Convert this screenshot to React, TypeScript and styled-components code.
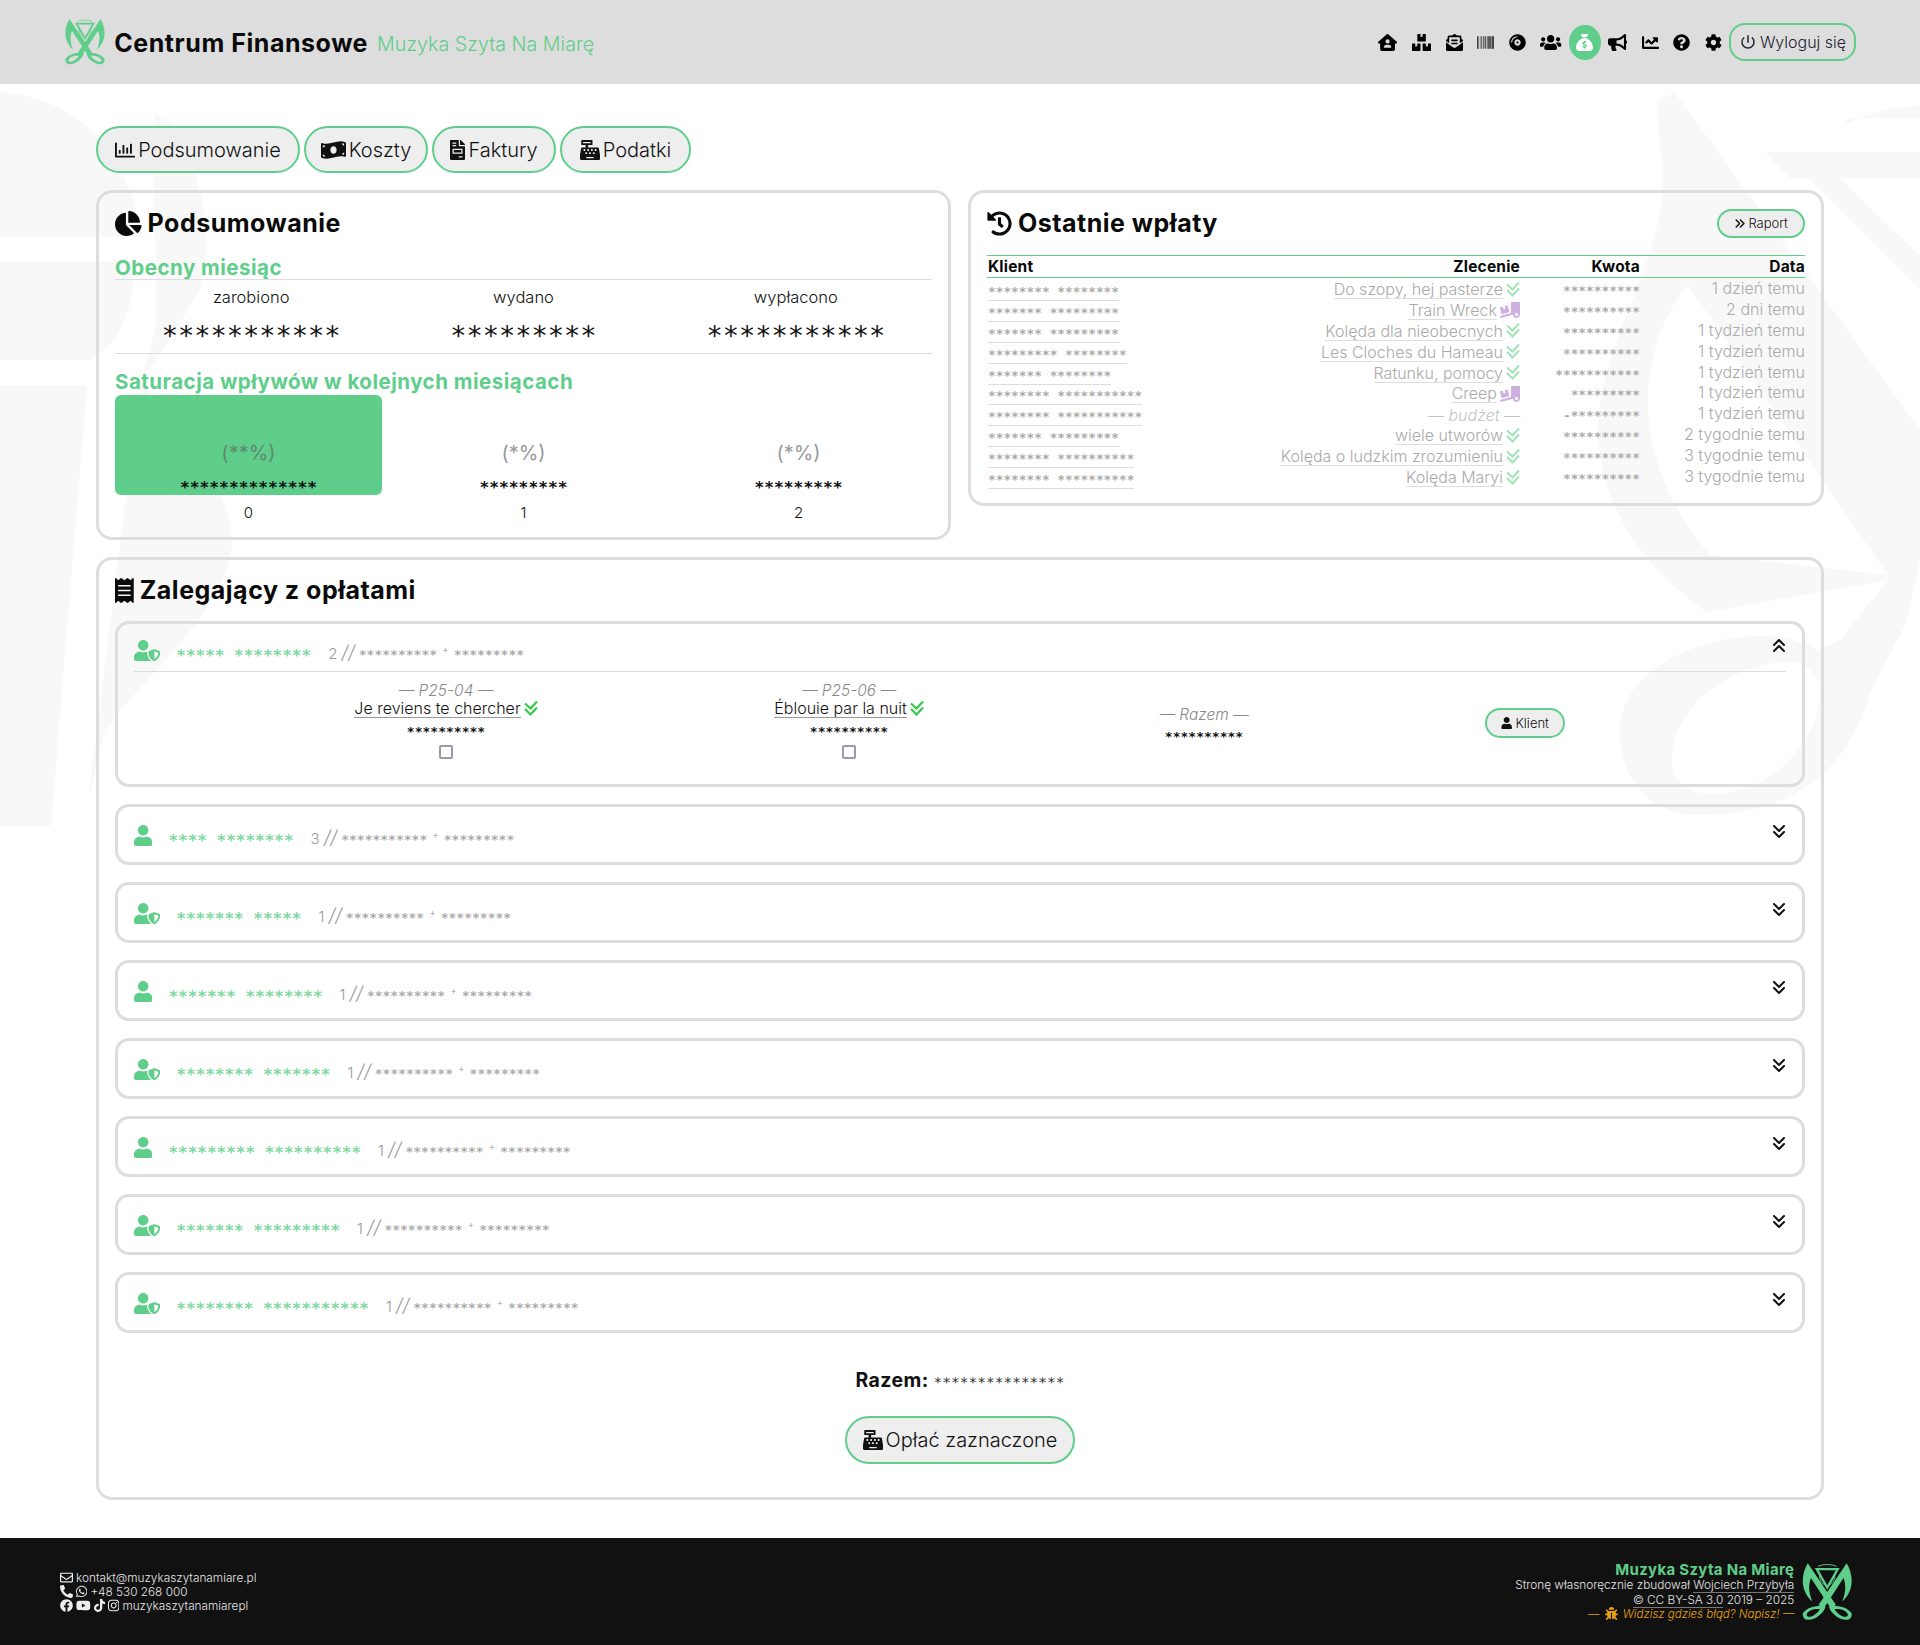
import React from 'react'
import styled, { createGlobalStyle } from 'styled-components'
import type { IconType } from 'react-icons'
import {
  FaBarcode, FaBug, FaBullhorn, FaCashRegister, FaChartLine,
  FaChartPie, FaCog, FaCompactDisc, FaEnvelopeOpenText, FaFacebook, FaFileInvoice, FaHistory,
  FaInstagram, FaMoneyBillWave, FaPhoneAlt, FaQuestionCircle, FaReceipt, FaTiktok, FaTruckLoading, FaUser, FaUserShield, FaUsers,
  FaWhatsapp, FaYoutube, FaBoxes, FaRegEnvelope, FaRegChartBar,
} from 'react-icons/fa'
import { FaAnglesDown, FaAnglesRight, FaAnglesUp, FaHouseUser, FaSackDollar } from 'react-icons/fa6'
import { MdPowerSettingsNew } from 'react-icons/md'

const GREEN = '#5fce8b'
const LIGHT = '"Inter", "Lato", sans-serif'
const HEAVY = '"Inter", "Noto Sans", sans-serif'
const MONO = '"DejaVu Sans Mono", monospace'

// react-icons draws every glyph in a 1em square, wide ones need their real ratio back
const sized = (Icon: IconType, ratio: number) => styled(Icon)`
  width: ${ratio}em;
  flex: none;
`

const HouseIcon = sized(FaHouseUser, 1.125)
const BoxesIcon = sized(FaBoxes, 1.125)
const UsersIcon = sized(FaUsers, 1.25)
const BullhornIcon = sized(FaBullhorn, 1.125)
const BillIcon = sized(FaMoneyBillWave, 1.25)
const InvoiceIcon = sized(FaFileInvoice, 0.75)
const PieIcon = sized(FaChartPie, 1.0625)
const ReceiptIcon = sized(FaReceipt, 0.75)
const ShieldIcon = sized(FaUserShield, 1.25)
const UserIcon = sized(FaUser, 0.875)
const DownIcon = sized(FaAnglesDown, 0.875)
const UpIcon = sized(FaAnglesUp, 0.875)
const RightIcon = sized(FaAnglesRight, 0.875)
const WhatsappIcon = sized(FaWhatsapp, 0.875)
const YoutubeIcon = sized(FaYoutube, 1.125)
const TiktokIcon = sized(FaTiktok, 0.875)
const InstagramIcon = sized(FaInstagram, 0.875)

const Global = createGlobalStyle`
  html, body { margin: 0; padding: 0; background: #fff; }
  body { font-family: ${LIGHT}; font-weight: 300; color: #111; }
  * { box-sizing: border-box; }
`

const Page = styled.div`
  position: relative;
  width: 1920px;
  height: 1645px;
  display: flex;
  flex-direction: column;
  overflow: hidden;
`

const Watermark = styled.svg`
  position: absolute;
  inset: 0;
  z-index: 0;
`

const Header = styled.header`
  position: relative;
  z-index: 1;
  height: 84px;
  flex: none;
  background: #ddd;
  display: flex;
  align-items: center;
  padding: 0 64px;
`

const Brand = styled.div`
  display: flex;
  align-items: center;
  gap: 8px;
`

const BrandTitle = styled.span`
  font-family: ${HEAVY};
  font-weight: 700;
  font-size: 25px;
  letter-spacing: 0.55px;
  color: #0a0a0a;
  margin-top: 2px;
`

const BrandSub = styled.span`
  font-size: 19.7px;
  color: ${GREEN};
  margin-left: 1px;
  margin-top: 4px;
`

const Nav = styled.nav`
  margin-left: auto;
  display: flex;
  align-items: center;
`

const NavItem = styled.a<{ $active?: boolean }>`
  height: 35px;
  padding: 0 7.3px;
  font-size: 17px;
  display: flex;
  align-items: center;
  justify-content: center;
  color: ${p => (p.$active ? '#fff' : '#000')};
  background: ${p => (p.$active ? GREEN : 'transparent')};
  border-radius: 50%;
`

const Pill = styled.a<{ $size?: number }>`
  display: inline-flex;
  align-items: center;
  justify-content: center;
  gap: 3px;
  border: 2px solid ${GREEN};
  border-radius: 24px;
  background: #eee;
  color: #111;
  font-size: ${p => p.$size ?? 20}px;
  white-space: nowrap;
`

const LogoutPill = styled(Pill)`
  width: 127px;
  height: 38px;
  background: transparent;
  color: #223;
  border-radius: 16px;
  font-size: 16px;
`

const Main = styled.main`
  position: relative;
  z-index: 1;
  padding: 42px 96px 0;
`

const Tabs = styled.div`
  display: flex;
  gap: 4px;
  margin-bottom: 17px;
`

const Tab = styled(Pill)<{ $w: number }>`
  width: ${p => p.$w}px;
  height: 47px;
`

const TopGrid = styled.div`
  display: grid;
  grid-template-columns: 855px 856px;
  gap: 17px;
  align-items: start;
  margin-bottom: 17px;
`

const Card = styled.section`
  border: 3px solid #ddd;
  border-radius: 16px;
  padding: 16px;
`

const CardHead = styled.div`
  display: flex;
  align-items: center;
  justify-content: space-between;
  height: 28px;
`

const CardTitle = styled.h2`
  margin: 0;
  display: flex;
  align-items: center;
  gap: 6px;
  font-family: ${HEAVY};
  font-weight: 700;
  font-size: 25px;
  letter-spacing: 0.5px;
  color: #0a0a0a;
`

const SubHead = styled.h3<{ $rule?: boolean; $top: number }>`
  margin: ${p => p.$top}px 0 0;
  height: ${p => (p.$rule ? 23 : 26)}px;
  line-height: ${p => (p.$rule ? 22 : 26)}px;
  font-family: ${HEAVY};
  font-weight: 700;
  font-size: 20.5px;
  letter-spacing: 0.5px;
  color: ${GREEN};
  border-bottom: ${p => (p.$rule ? '1px solid #ddd' : 'none')};
`

const Stats = styled.div`
  display: grid;
  grid-template-columns: repeat(3, 1fr);
  text-align: center;
  padding-top: 5px;
  height: 74px;
  border-bottom: 1px solid #ddd;
`

const StatLabel = styled.div`
  font-size: 16.5px;
  line-height: 24px;
`

const Mask = styled.span<{ $size: number; $color?: string; $bold?: boolean }>`
  font-family: ${MONO};
  font-size: ${p => p.$size}px;
  font-weight: ${p => (p.$bold ? 700 : 400)};
  color: ${p => p.$color ?? '#111'};
  font-style: normal;
  white-space: pre;
`

const StatValue = styled.div`
  height: 34px;
  line-height: 34px;
  padding-top: 10px;
`

const Bars = styled.div`
  display: grid;
  grid-template-columns: repeat(3, 1fr);
  gap: 8px;
  text-align: center;
`

const BarCol = styled.div``

const Bar = styled.div<{ $on?: boolean }>`
  height: 100px;
  border-radius: 6px;
  background: ${p => (p.$on ? GREEN : 'transparent')};
  display: flex;
  flex-direction: column;
  justify-content: flex-end;
`

const Percent = styled.div<{ $on?: boolean }>`
  font-size: 20px;
  font-weight: 400;
  line-height: 24px;
  color: ${p => (p.$on ? '#5d8a6f' : '#999')};
  margin-bottom: 10px;
`

const BarAmount = styled.div`
  line-height: 24px;
  height: 20px;
`

const BarLabel = styled.div`
  font-size: 15px;
  line-height: 36px;
  height: 26px;
`

const SmallPill = styled(Pill)`
  width: 88px;
  height: 29px;
  font-size: 13px;
`

const Table = styled.div`
  margin-top: 18px;
  border-top: 1px solid ${GREEN};
`

const TableRow = styled.div<{ $head?: boolean }>`
  display: grid;
  grid-template-columns: 260px 273px 120px 165px;
  height: ${p => (p.$head ? 22 : 20.9)}px;
  line-height: ${p => (p.$head ? 21 : 20)}px;
  border-bottom: ${p => (p.$head ? `1px solid ${GREEN}` : 'none')};
`

const HeadCell = styled.div<{ $left?: boolean }>`
  font-family: ${HEAVY};
  font-weight: 700;
  font-size: 15.5px;
  letter-spacing: 0.2px;
  color: #0a0a0a;
  text-align: ${p => (p.$left ? 'left' : 'right')};
  padding-left: ${p => (p.$left ? 1 : 0)}px;
`

const ClientCell = styled.div`
  padding-left: 1px;
`

const ClientMask = styled.span`
  display: inline-block;
  line-height: 17px;
  margin-top: 5px;
  border-bottom: 1px solid #ddd;
  font-family: ${MONO};
  font-weight: 700;
  font-size: 12.8px;
  color: #aaa;
  white-space: pre;
`

const TitleCell = styled.div`
  display: flex;
  justify-content: flex-end;
  align-items: center;
  gap: 3px;
  font-size: 16px;
  color: #aaa;
  white-space: nowrap;
`

const Work = styled.span<{ $dark?: boolean }>`
  line-height: 18px;
  border-bottom: 1px solid ${p => (p.$dark ? '#999' : '#ddd')};
  color: ${p => (p.$dark ? '#111' : '#aaa')};
`

const Budget = styled.span`
  font-style: italic;
  color: #c4c4c4;
`

const CheckSvg = styled.svg<{ $strong?: boolean }>`
  flex: none;
  fill: none;
  stroke: ${p => (p.$strong ? '#35c94a' : '#a5e4b9')};
  stroke-width: 2.2;
`

const DoubleCheck: React.FC<{ strong?: boolean }> = ({ strong }) => (
  <CheckSvg width={14} height={16} viewBox="0 0 14 16" $strong={strong}>
    <path d="M1 2.5l5.5 5 6.5-7M1 8l5.5 5.500 6.500-7" />
  </CheckSvg>
)

const Truck = styled(sized(FaTruckLoading, 1.25))`
  font-size: 16px;
  color: #cdb0e0;
`

const AmountCell = styled.div`
  text-align: right;
  font-family: ${MONO};
  font-weight: 700;
  font-size: 12.8px;
  color: #aaa;
  white-space: pre;
  padding-top: 3px;
`

const DateCell = styled.div`
  text-align: right;
  font-size: 16px;
  color: #aaa;
`

const Accordions = styled.div`
  margin-top: 17px;
  display: flex;
  flex-direction: column;
  gap: 17px;
`

const Accordion = styled.div`
  border: 3px solid #ddd;
  border-radius: 14px;
  padding: 0 16px;
  height: 61px;
  &[data-open='true'] { height: 166px; }
`

const AccordionHead = styled.div<{ $open?: boolean }>`
  display: flex;
  align-items: flex-start;
  padding-top: ${p => (p.$open ? 16 : 18)}px;
  height: ${p => (p.$open ? 48 : 55)}px;
  border-bottom: ${p => (p.$open ? '1px solid #ddd' : 'none')};
`

const PersonIcon = styled.span`
  display: flex;
  font-size: 21px;
  color: ${GREEN};
  margin-right: 16px;
`

const NameMask = styled(Mask)`
  margin-top: 6px;
  line-height: 20px;
  margin-right: 17px;
`

const DebtInfo = styled.span`
  margin-top: 3px;
  line-height: 20px;
  color: #999;
  font-size: 15px;
  white-space: pre;
`

const Slashes = styled.i`
  font-size: 19px;
  margin: 0 4px 0 0;
`

const Plus = styled.sup`
  font-size: 10px;
  line-height: 0;
  margin: 0 5px;
`

const Toggle = styled.span`
  margin-left: auto;
  margin-top: -2px;
  font-size: 16px;
  color: #111;
`

const Details = styled.div`
  display: grid;
  grid-template-columns: 203px 218px 588px 122px 520px;
  align-items: center;
  text-align: center;
  padding-top: 7px;
  height: 112px;
  padding-bottom: 22px;
`

const Period = styled.div`
  white-space: nowrap;
`

const Total = styled(Period)`
  padding-top: 12px;
`

const PeriodTag = styled.div`
  font-style: italic;
  font-size: 15.5px;
  line-height: 17px;
  color: #888;
`

const PeriodWork = styled.div`
  display: flex;
  justify-content: center;
  align-items: center;
  gap: 3px;
  font-size: 16px;
  line-height: 19px;
`

const PeriodAmount = styled.div`
  line-height: 24px;
  height: 24px;
`

const Tick = styled.span`
  display: block;
  width: 14px;
  height: 14px;
  margin: 3px auto 0;
  border: 2px solid #9a9aa8;
  border-radius: 2px;
`

const KlientPill = styled(Pill)`
  width: 80px;
  height: 30px;
  font-size: 13px;
  justify-self: center;
  margin-top: 4px;
`

const SumLine = styled.div`
  margin-top: 32px;
  text-align: center;
  line-height: 30px;
  display: flex;
  justify-content: center;
  align-items: baseline;
  gap: 5px;
`

const SumLabel = styled.strong`
  font-family: ${HEAVY};
  font-weight: 700;
  font-size: 19.5px;
  letter-spacing: 0.4px;
`

const PayRow = styled.div`
  display: flex;
  justify-content: center;
  margin-top: 19px;
  margin-bottom: 17px;
`

const PayPill = styled(Pill)`
  width: 230px;
  height: 48px;
`

const Footer = styled.footer`
  position: relative;
  z-index: 1;
  margin-top: auto;
  height: 107px;
  flex: none;
  background: #111;
  display: flex;
  align-items: center;
  justify-content: space-between;
  padding: 0 66px 0 60px;
  color: #e4e4e4;
  font-size: 11.8px;
`

const FootLeft = styled.div`
  line-height: 14px;
`

const FootLine = styled.div`
  display: flex;
  align-items: center;
  gap: 3px;
  height: 14px;
  svg { font-size: 13px; color: #eee; }
`

const FootRight = styled.div`
  display: flex;
  align-items: center;
  gap: 7px;
`

const FootText = styled.div`
  text-align: right;
  line-height: 14.5px;
`

const FootBrand = styled.div`
  font-family: ${HEAVY};
  font-weight: 700;
  font-size: 15px;
  letter-spacing: 0.3px;
  line-height: 17px;
  color: ${GREEN};
`

const FootLink = styled.span`
  border-bottom: 1px solid #777;
`

const FootBug = styled.div`
  color: #eba10f;
  font-size: 11.5px;
  font-style: italic;
  svg { vertical-align: -2px; margin: 0 2px; }
`

const Logo: React.FC<{ size: number }> = ({ size }) => (
  <svg width={size * 0.88} height={size} viewBox="15 12 165 188" fill={GREEN} style={{ flex: 'none' }}>
    <path d="M36 16C16 50 10 100 50 136C38 104 38 84 46 62L110 160L124 146Z" />
    <path d="M158 16C178 50 184 100 144 136C156 104 156 84 148 62L84 160L70 146Z" />
    <path fillRule="evenodd" d="M20 174C34 150 72 146 92 152C84 176 54 198 30 192C24 190 20 184 20 174ZM32 178C36 190 60 182 74 160C56 158 36 164 32 178Z" />
    <path fillRule="evenodd" d="M174 174C160 150 122 146 102 152C110 176 140 198 164 192C170 190 174 184 174 174ZM162 178C158 190 134 182 120 160C138 158 158 164 162 178Z" />
    <path d="M64 34H130L97 92Z" fill="none" stroke={GREEN} strokeWidth="7" />
    <path d="M68 26C82 18 112 18 126 26M74 48C70 70 82 80 90 84M120 48C124 70 112 80 104 84" fill="none" stroke={GREEN} strokeWidth="3" />
  </svg>
)

const Backdrop: React.FC = () => (
  <Watermark width={1920} height={1645} viewBox="0 0 1920 1645" fill="#f8f8f8">
    <path d="M0 92C70 98 125 140 142 237H0Z" />
    <path d="M0 262H132C138 300 120 345 90 360H0Z" />
    <path d="M0 385H87L51 826H0Z" />
    <path d="M155 114L178 128C205 190 214 240 200 290C170 340 150 370 135 385L143 385C170 420 232 480 232 545C220 620 140 680 105 730C98 760 92 785 88 800L140 385L155 330C160 270 150 190 155 114Z" />
    <path fillRule="evenodd" d="M1657 101L1675 93L1920 430V560L1907 621L1868 698C1845 780 1780 815 1700 815C1640 815 1620 770 1620 730C1620 670 1700 636 1760 636C1780 636 1800 640 1818 650L1840 640L1888 580L1707 612C1630 560 1598 490 1598 428C1598 340 1680 240 1660 150ZM1672 760C1672 790 1700 800 1740 790C1790 775 1820 730 1820 690C1820 670 1800 660 1780 662C1720 670 1672 710 1672 760ZM1688 285C1660 320 1648 360 1648 405C1650 470 1680 520 1710 555L1888 575Z" />
    <path d="M1765 152H1920V178H1840L1920 256V290L1808 178L1790 178Z" />
    <path d="M1840 128C1870 110 1900 106 1920 106V118H1850Z" />
  </Watermark>
)

const stars = (n: number) => '*'.repeat(n)

const payments = [
  { client: [8, 8], title: 'Do szopy, hej pasterze', icon: 'check', amount: 10, date: '1 dzień temu' },
  { client: [7, 9], title: 'Train Wreck', icon: 'truck', amount: 10, date: '2 dni temu' },
  { client: [7, 9], title: 'Kolęda dla nieobecnych', icon: 'check', amount: 10, date: '1 tydzień temu' },
  { client: [9, 8], title: 'Les Cloches du Hameau', icon: 'check', amount: 10, date: '1 tydzień temu' },
  { client: [7, 8], title: 'Ratunku, pomocy', icon: 'check', amount: 11, date: '1 tydzień temu' },
  { client: [8, 11], title: 'Creep', icon: 'truck', amount: 9, date: '1 tydzień temu' },
  { client: [8, 11], title: '', icon: '', amount: 9, date: '1 tydzień temu' },
  { client: [7, 9], title: 'wiele utworów', icon: 'check', amount: 10, date: '2 tygodnie temu' },
  { client: [8, 10], title: 'Kolęda o ludzkim zrozumieniu', icon: 'check', amount: 10, date: '3 tygodnie temu' },
  { client: [8, 10], title: 'Kolęda Maryi', icon: 'check', amount: 10, date: '3 tygodnie temu' },
]

const debtors = [
  { shield: false, name: [4, 8], count: 3, a: 11 },
  { shield: true, name: [7, 5], count: 1, a: 10 },
  { shield: false, name: [7, 8], count: 1, a: 10 },
  { shield: true, name: [8, 7], count: 1, a: 10 },
  { shield: false, name: [9, 10], count: 1, a: 10 },
  { shield: true, name: [7, 9], count: 1, a: 10 },
  { shield: true, name: [8, 11], count: 1, a: 10 },
]

const DebtorHead: React.FC<{ shield: boolean; name: number[]; count: number; a: number; open?: boolean }> = ({ shield, name, count, a, open }) => (
  <AccordionHead $open={open}>
    <PersonIcon>{shield ? <ShieldIcon /> : <UserIcon />}</PersonIcon>
    <NameMask $size={16} $bold $color="#7fd9a1">{stars(name[0])} {stars(name[1])}</NameMask>
    <DebtInfo>
      {count} <Slashes>//</Slashes><Mask $size={13} $bold $color="#aaa">{stars(a)}</Mask><Plus>+</Plus><Mask $size={13} $bold $color="#aaa">{stars(9)}</Mask>
    </DebtInfo>
    <Toggle>{open ? <UpIcon /> : <DownIcon />}</Toggle>
  </AccordionHead>
)

const App: React.FC = () => (
  <Page>
    <Global />
    <Backdrop />
    <Header>
      <Brand>
        <Logo size={48} />
        <BrandTitle>Centrum Finansowe</BrandTitle>
        <BrandSub>Muzyka Szyta Na Miarę</BrandSub>
      </Brand>
      <Nav>
        <NavItem><HouseIcon /></NavItem>
        <NavItem><BoxesIcon /></NavItem>
        <NavItem><FaEnvelopeOpenText /></NavItem>
        <NavItem><FaBarcode /></NavItem>
        <NavItem><FaCompactDisc /></NavItem>
        <NavItem><UsersIcon /></NavItem>
        <NavItem $active><FaSackDollar /></NavItem>
        <NavItem><BullhornIcon /></NavItem>
        <NavItem><FaChartLine /></NavItem>
        <NavItem><FaQuestionCircle /></NavItem>
        <NavItem><FaCog /></NavItem>
        <LogoutPill><MdPowerSettingsNew size={18} />Wyloguj się</LogoutPill>
      </Nav>
    </Header>
    <Main>
      <Tabs>
        <Tab $w={204}><FaRegChartBar />Podsumowanie</Tab>
        <Tab $w={124}><BillIcon />Koszty</Tab>
        <Tab $w={124}><InvoiceIcon />Faktury</Tab>
        <Tab $w={131}><FaCashRegister />Podatki</Tab>
      </Tabs>
      <TopGrid>
        <Card>
          <CardHead><CardTitle><PieIcon />Podsumowanie</CardTitle></CardHead>
          <SubHead $rule $top={20}>Obecny miesiąc</SubHead>
          <Stats>
            <div><StatLabel>zarobiono</StatLabel><StatValue><Mask $size={27}>{stars(11)}</Mask></StatValue></div>
            <div><StatLabel>wydano</StatLabel><StatValue><Mask $size={27}>{stars(9)}</Mask></StatValue></div>
            <div><StatLabel>wypłacono</StatLabel><StatValue><Mask $size={27}>{stars(11)}</Mask></StatValue></div>
          </Stats>
          <SubHead $top={15}>Saturacja wpływów w kolejnych miesiącach</SubHead>
          <Bars>
            <BarCol>
              <Bar $on><Percent $on>(**%)</Percent><BarAmount><Mask $size={16.3} $bold>{stars(14)}</Mask></BarAmount></Bar>
              <BarLabel>0</BarLabel>
            </BarCol>
            <BarCol>
              <Bar><Percent>(*%)</Percent><BarAmount><Mask $size={16.3} $bold>{stars(9)}</Mask></BarAmount></Bar>
              <BarLabel>1</BarLabel>
            </BarCol>
            <BarCol>
              <Bar><Percent>(*%)</Percent><BarAmount><Mask $size={16.3} $bold>{stars(9)}</Mask></BarAmount></Bar>
              <BarLabel>2</BarLabel>
            </BarCol>
          </Bars>
        </Card>
        <Card>
          <CardHead>
            <CardTitle><FaHistory />Ostatnie wpłaty</CardTitle>
            <SmallPill><RightIcon />Raport</SmallPill>
          </CardHead>
          <Table>
            <TableRow $head>
              <HeadCell $left>Klient</HeadCell>
              <HeadCell>Zlecenie</HeadCell>
              <HeadCell>Kwota</HeadCell>
              <HeadCell>Data</HeadCell>
            </TableRow>
            {payments.map((p, i) => (
              <TableRow key={i}>
                <ClientCell><ClientMask>{stars(p.client[0])} {stars(p.client[1])}</ClientMask></ClientCell>
                <TitleCell>
                  {p.title ? <Work>{p.title}</Work> : <Budget>— budżet —</Budget>}
                  {p.icon === 'check' && <DoubleCheck />}
                  {p.icon === 'truck' && <Truck />}
                </TitleCell>
                <AmountCell>{p.title ? '' : '-'}{stars(p.amount)}</AmountCell>
                <DateCell>{p.date}</DateCell>
              </TableRow>
            ))}
          </Table>
        </Card>
      </TopGrid>
      <Card>
        <CardHead><CardTitle><ReceiptIcon />Zalegający z opłatami</CardTitle></CardHead>
        <Accordions>
          <Accordion data-open="true">
            <DebtorHead open shield name={[5, 8]} count={2} a={10} />
            <Details>
              <span />
              <Period>
                <PeriodTag>— P25-04 —</PeriodTag>
                <PeriodWork><Work $dark>Je reviens te chercher</Work><DoubleCheck strong /></PeriodWork>
                <PeriodAmount><Mask $size={13} $bold>{stars(10)}</Mask></PeriodAmount>
                <Tick />
              </Period>
              <Period>
                <PeriodTag>— P25-06 —</PeriodTag>
                <PeriodWork><Work $dark>Éblouie par la nuit</Work><DoubleCheck strong /></PeriodWork>
                <PeriodAmount><Mask $size={13} $bold>{stars(10)}</Mask></PeriodAmount>
                <Tick />
              </Period>
              <Total>
                <PeriodTag>— Razem —</PeriodTag>
                <PeriodAmount><Mask $size={13} $bold>{stars(10)}</Mask></PeriodAmount>
              </Total>
              <KlientPill><UserIcon size={12} />Klient</KlientPill>
            </Details>
          </Accordion>
          {debtors.map((d, i) => (
            <Accordion key={i}>
              <DebtorHead shield={d.shield} name={d.name} count={d.count} a={d.a} />
            </Accordion>
          ))}
        </Accordions>
        <SumLine><SumLabel>Razem:</SumLabel><Mask $size={14.5} $color="#333">{stars(15)}</Mask></SumLine>
        <PayRow><PayPill><FaCashRegister />Opłać zaznaczone</PayPill></PayRow>
      </Card>
    </Main>
    <Footer>
      <FootLeft>
        <FootLine><FaRegEnvelope />kontakt@muzykaszytanamiare.pl</FootLine>
        <FootLine><FaPhoneAlt /><WhatsappIcon />+48 530 268 000</FootLine>
        <FootLine><FaFacebook /><YoutubeIcon /><TiktokIcon /><InstagramIcon />muzykaszytanamiarepl</FootLine>
      </FootLeft>
      <FootRight>
        <FootText>
          <FootBrand>Muzyka Szyta Na Miarę</FootBrand>
          <div>Stronę własnoręcznie zbudował <FootLink>Wojciech Przybyła</FootLink></div>
          <div><FootLink>© CC BY-SA 3.0</FootLink> 2019 – 2025</div>
          <FootBug>— <FaBug size={13} /> Widzisz gdzieś błąd? Napisz! —</FootBug>
        </FootText>
        <Logo size={60} />
      </FootRight>
    </Footer>
  </Page>
)

export default App
